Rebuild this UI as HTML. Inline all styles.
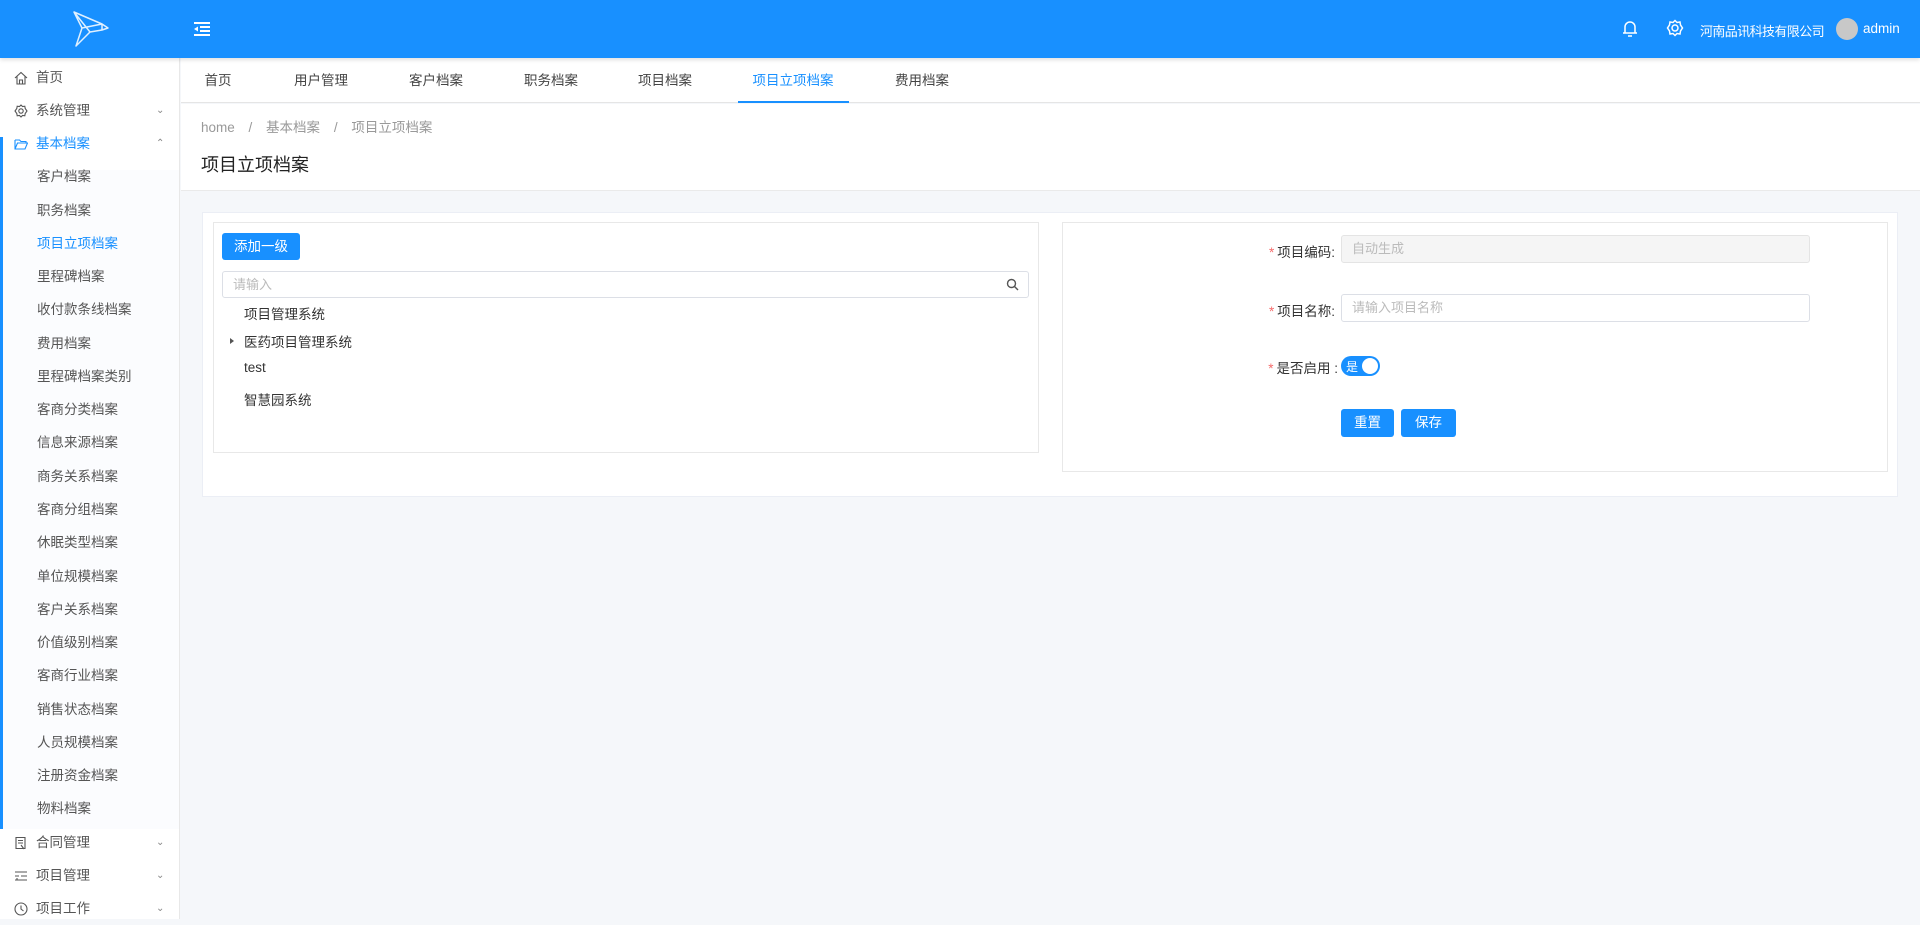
<!DOCTYPE html>
<html><head><meta charset="utf-8"><style>
*{margin:0;padding:0;box-sizing:border-box}
body{width:1920px;height:919px;overflow:hidden;background:#f5f7fa;font-family:"Liberation Sans","Noto Sans CJK SC",sans-serif;font-size:14px;color:#333;position:relative}
.abs{position:absolute}
#hd{left:0;top:0;width:1920px;height:58px;background:#1890ff;box-shadow:0 2px 4px rgba(0,0,0,.12);z-index:2}
#sb{left:0;top:58px;width:180px;height:861px;background:#fff;border-right:1px solid #e8e8e8}
.mi{position:absolute;left:0;width:180px;height:33px;line-height:33px;font-size:13.5px;color:#444}
.mi .ic{position:absolute;left:14px;top:10px;width:14px;height:14px}
.mi .t{position:absolute;left:36px}
.mi .ar{position:absolute;left:156px;top:0;font-size:10px;color:#888}
.sub .t{left:37px;color:#555}
#tabs{left:181px;top:58px;width:1739px;height:45px;background:#fff;border-bottom:1px solid #e5e5e5}
.tab{position:absolute;top:0;line-height:45px;font-size:13.5px;color:#444;transform:translateX(-50%)}
#ph{left:181px;top:104px;width:1739px;height:87px;background:#fff;border-bottom:1px solid #eaeaea}
.box{background:#fff;border:1px solid #e8e8e8}
.btn{position:absolute;background:#1890ff;color:#fff;border-radius:3px;text-align:center;font-size:13.5px}
.inp{position:absolute;border:1px solid #dcdfe6;border-radius:3px;font-size:13px;color:#bbb;padding-left:10px}
.lbl{position:absolute;font-size:13.5px;color:#333;text-align:right}
.lbl b{color:#f56c6c;font-weight:normal;margin-right:3px}
</style></head><body>
<div id="hd" class="abs">
<svg class="abs" style="left:72px;top:10px" width="38" height="38" viewBox="0 0 38 38" fill="none" stroke="#dff0ff" stroke-width="1.5" stroke-linejoin="round"><path d="M2 2 L30 14 L36 18 L30 20 L18 22 L4 36 L10 18 Z M2 2 L18 22 M10 18 L30 14 M30 14 L30 20"/></svg>
<svg class="abs" style="left:194px;top:22px" width="16" height="14" viewBox="0 0 16 14" fill="#fff"><rect x="0" y="0" width="16" height="2"/><rect x="6" y="4" width="10" height="2"/><rect x="6" y="8" width="10" height="2"/><rect x="0" y="12" width="16" height="2"/><path d="M0 7 L4 4.5 L4 9.5Z"/></svg>
<svg class="abs" style="left:1622px;top:20px" width="16" height="18" viewBox="0 0 16 18" fill="none" stroke="#fff" stroke-width="1.5"><path d="M3 13 V7 a5 5 0 0 1 10 0 V13 Z M1 13 H15 M6 16 H10"/></svg>
<svg class="abs" style="left:1666px;top:19px" width="18" height="18" viewBox="0 0 18 18" fill="none" stroke="#fff" stroke-width="1.5"><circle cx="9" cy="9" r="3"/><path d="M9 1.5 L11 3.5 L14 3 L14.5 6 L16.5 9 L14.5 12 L14 15 L11 14.5 L9 16.5 L7 14.5 L4 15 L3.5 12 L1.5 9 L3.5 6 L4 3 L7 3.5 Z"/></svg>
<div class="abs" style="left:1700px;top:21px;color:#fff;font-size:13px;letter-spacing:-0.6px;white-space:nowrap">河南品讯科技有限公司</div>
<div class="abs" style="left:1836px;top:18px;width:22px;height:22px;border-radius:50%;background:#c8c8c8"></div>
<div class="abs" style="left:1863px;top:21px;color:#fff;font-size:13.5px">admin</div>
</div>
<div id="sb" class="abs">
<div class="abs" style="left:0;top:79px;width:3px;height:692px;background:#1890ff"></div>
<div class="abs" style="left:3px;top:112px;width:176px;height:659px;background:#fbfcfe"></div>
</div>
<div id="menu"></div>
<div id="tabs" class="abs">
<div class="tab" style="left:37px">首页</div>
<div class="tab" style="left:140px">用户管理</div>
<div class="tab" style="left:255px">客户档案</div>
<div class="tab" style="left:370px">职务档案</div>
<div class="tab" style="left:484px">项目档案</div>
<div class="tab" style="left:612px;color:#1890ff">项目立项档案</div>
<div class="tab" style="left:741px">费用档案</div>
<div class="abs" style="left:557px;top:43px;width:111px;height:2px;background:#1890ff"></div>
</div>
<div id="ph" class="abs">
<div class="abs" style="left:20px;top:12px;font-size:13.5px;color:#999">home <span style="margin:0 10px">/</span> 基本档案 <span style="margin:0 10px">/</span> 项目立项档案</div>
<div class="abs" style="left:20px;top:47px;font-size:18px;color:#222">项目立项档案</div>
</div>
<div class="abs box" style="left:202px;top:212px;width:1696px;height:285px;border-color:#ebeef5"></div>
<div class="abs box" style="left:213px;top:222px;width:826px;height:231px"></div>
<div class="abs box" style="left:1062px;top:222px;width:826px;height:250px"></div>
<div class="btn" style="left:222px;top:233px;width:78px;height:27px;line-height:27px">添加一级</div>
<div class="inp" style="left:222px;top:271px;width:807px;height:27px;line-height:25px">请输入</div>
<svg class="abs" style="left:1006px;top:278px" width="13" height="13" viewBox="0 0 13 13" fill="none" stroke="#555" stroke-width="1.4"><circle cx="5.5" cy="5.5" r="4"/><path d="M8.5 8.5 L12 12"/></svg>
<div class="abs" style="left:244px;top:303px;font-size:13.5px">项目管理系统</div>
<div class="abs" style="left:230px;top:338px;width:0;height:0;border-left:4px solid #555;border-top:3px solid transparent;border-bottom:3px solid transparent"></div>
<div class="abs" style="left:244px;top:331px;font-size:13.5px">医药项目管理系统</div>
<div class="abs" style="left:244px;top:360px;font-size:13.5px">test</div>
<div class="abs" style="left:244px;top:389px;font-size:13.5px">智慧园系统</div>
<div class="lbl" style="left:1230px;top:241px;width:105px"><b>*</b>项目编码:</div>
<div class="inp" style="left:1341px;top:235px;width:469px;height:28px;line-height:26px;background:#f5f5f5;border-color:#e4e4e4">自动生成</div>
<div class="lbl" style="left:1230px;top:300px;width:105px"><b>*</b>项目名称:</div>
<div class="inp" style="left:1341px;top:294px;width:469px;height:28px;line-height:26px">请输入项目名称</div>
<div class="lbl" style="left:1230px;top:357px;width:108px"><b>*</b>是否启用 :</div>
<div class="abs" style="left:1341px;top:356px;width:39px;height:20px;border-radius:10px;background:#1890ff"><span class="abs" style="left:5px;top:2px;color:#fff;font-size:12px">是</span><span class="abs" style="left:21px;top:2px;width:16px;height:16px;border-radius:50%;background:#fff"></span></div>
<div class="btn" style="left:1341px;top:409px;width:53px;height:28px;line-height:28px">重置</div>
<div class="btn" style="left:1401px;top:409px;width:55px;height:28px;line-height:28px">保存</div>
<script>
var items=[["首页","home",0],["系统管理","gear",1],["基本档案","folder",2],"客户档案","职务档案","项目立项档案","里程碑档案","收付款条线档案","费用档案","里程碑档案类别","客商分类档案","信息来源档案","商务关系档案","客商分组档案","休眠类型档案","单位规模档案","客户关系档案","价值级别档案","客商行业档案","销售状态档案","人员规模档案","注册资金档案","物料档案",["合同管理","doc",1],["项目管理","list",1],["项目工作","clock",1]];
var icons={home:'<path d="M1 7 L7 1.5 L13 7 M3 5.5 V13 H11 V5.5 M5.5 13 V9 H8.5 V13"/>',gear:'<circle cx="7" cy="7" r="2.2"/><path d="M7 1 L8.5 2.5 L10.8 2.2 L11.2 4.5 L13 7 L11.2 9.5 L10.8 11.8 L8.5 11.5 L7 13 L5.5 11.5 L3.2 11.8 L2.8 9.5 L1 7 L2.8 4.5 L3.2 2.2 L5.5 2.5Z"/>',folder:'<path d="M1 3 H5.5 L7 4.5 H12 V6 M1 3 V12 H11 L13.5 6 H3.5 L1 12"/>',doc:'<path d="M2 1.5 H11 V12.5 H2 Z M4 4.5 H9 M4 7 H9 M7 9 L10 13"/>',list:'<path d="M1 3 H13 M1 7 H5 M7 7 H13 M1 11 H13 M3 9 V11"/>',clock:'<circle cx="7" cy="7" r="6"/><path d="M7 3.5 V7 L9.5 9"/>'};
var h="";items.forEach(function(it,i){var top=60.5+i*33.27;
if(typeof it=="string"){h+='<div class="mi sub" style="top:'+top+'px"><span class="t"'+(i==5?' style="color:#1890ff"':'')+'>'+it+'</span></div>';}
else{var c=i==2?"#1890ff":"#555";h+='<div class="mi" style="top:'+top+'px;color:'+c+'"><svg class="ic" viewBox="0 0 14 14" fill="none" stroke="'+c+'" stroke-width="1.1">'+icons[it[1]]+'</svg><span class="t">'+it[0]+'</span>'+(it[2]?'<span class="ar">'+(it[2]==2?'&#8963;':'&#8964;')+'</span>':'')+'</div>';}});
document.getElementById("menu").innerHTML=h;
</script>
</body></html>
